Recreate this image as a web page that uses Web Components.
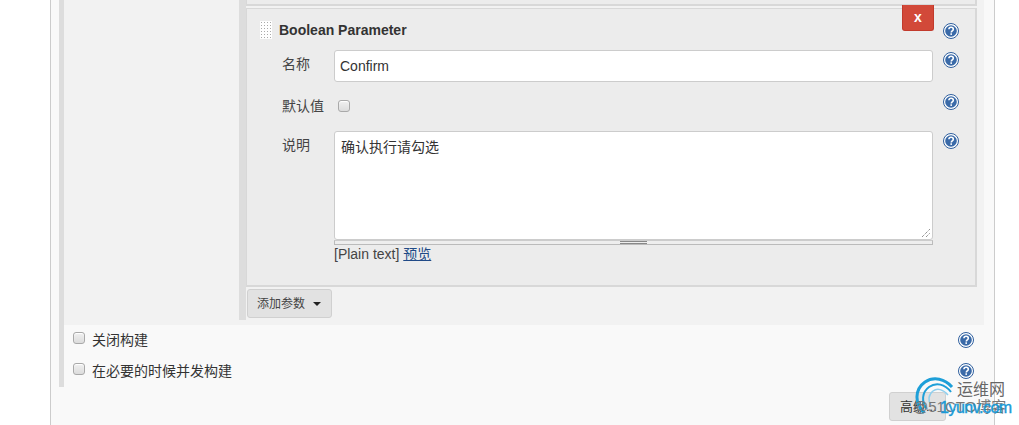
<!DOCTYPE html>
<html><head><meta charset="utf-8"><style>
html,body{margin:0;height:425px;overflow:hidden;background:#fff;font:14px "Liberation Sans","Noto Sans CJK SC",sans-serif;color:#333}
</style></head><body>
<template id="help-t"><style>:host{display:block;width:16px;height:16px}svg{display:block}</style>
<svg width="16" height="16" viewBox="0 0 16 16"><circle cx="8" cy="8" r="7.5" fill="#fff" stroke="#2f5f9e"/><circle cx="8" cy="8" r="5.8" fill="#3a6aa8"/><path d="M5.9 6.3c.1-1.3 1-2 2.2-2 1.300 0 2.200.8 2.200 1.900 0 1.700-2 1.700-2 3.200" fill="none" stroke="#fff" stroke-width="1.600"/><rect x="7.400" y="10.300" width="1.600" height="1.600" fill="#fff"/></svg></template>
<script>
function sh(el,html){el.attachShadow({mode:'open'}).innerHTML=html}
customElements.define('jk-help',class extends HTMLElement{constructor(){super();this.attachShadow({mode:'open'}).appendChild(document.getElementById('help-t').content.cloneNode(true))}});
customElements.define('jk-check',class extends HTMLElement{constructor(){super();sh(this,`<style>:host{display:block;width:12px;height:12px;box-sizing:border-box;border:1px solid #a9a9a9;border-radius:3px;background:linear-gradient(#f0f0f0,#dcdcdc);box-shadow:inset 0 1px 1px #fff}</style>`)}});
customElements.define('jk-row',class extends HTMLElement{constructor(){super();sh(this,`<style>
:host{display:grid;grid-template-columns:52px 599px 1fr;column-gap:0;box-sizing:border-box;padding-left:35px;font-size:14px;color:#444}
.h{padding-left:10px;padding-top:var(--ht,0)}
.l{padding-top:var(--lt,0)}
</style><div class="l"><slot name="label"></slot></div><div class="c"><slot></slot></div><div class="h"><jk-help></jk-help></div>`)}});
customElements.define('jk-top',class extends HTMLElement{constructor(){super();sh(this,`<style>
:host{display:flex;align-items:center;box-sizing:border-box;height:41px;padding-left:13px;font:bold 14px "Liberation Sans",sans-serif;color:#333}
.g{width:12px;height:18px;margin-right:7px;background-color:#fff;background-image:radial-gradient(#aaa 0.7px,transparent 0.8px);background-size:3px 3px}
.x{position:absolute;left:655px;top:-4px;width:32px;height:26px;box-sizing:border-box;padding-bottom:2px;background:#d24939;border-radius:0 0 3px 3px;color:#fff;display:flex;align-items:center;justify-content:center;font:bold 14px "Liberation Sans",sans-serif;border:1px solid #c23a2c;border-top:0}
.hp{position:absolute;left:696px;top:14px}
</style><span class="g"></span><span><slot></slot></span><span class="x">x</span><jk-help class="hp"></jk-help>`)}});
customElements.define('jk-textarea',class extends HTMLElement{constructor(){super();sh(this,`<style>
:host{display:block;width:599px}
.t{box-sizing:border-box;height:109px;background:#fff;border:1px solid #ccc;border-radius:3px;padding:4px 6px;font-size:14px;color:#333;position:relative}
.g{height:5px;box-sizing:border-box;background:#eee;border:1px solid #bbb;border-top:1px solid #ccc;display:flex;justify-content:center;align-items:flex-start}
.g i{display:block;width:27px;height:3px;border-top:1px solid #888;border-bottom:1px solid #888;box-sizing:border-box;margin-top:0}
svg{position:absolute;right:1px;bottom:1px}
.f{margin-top:0;line-height:18px;color:#444}
a{color:#204a87;text-decoration:underline}
</style><div class="t"><slot></slot><svg width="10" height="10"><path d="M1 9L9 1M5 9L9 5" stroke="#666" stroke-dasharray="1 1"/></svg></div><div class="g"><i></i></div><div class="f">[Plain text] <a href="#">预览</a></div>`)}});
customElements.define('jk-card',class extends HTMLElement{constructor(){super();sh(this,`<style>
:host{display:block;position:relative;box-sizing:border-box;width:731px;height:279px;background:#ececec;border:1px solid #d8d8d8;border-width:1px 2px 2px 1px}
</style><slot></slot>`)}});
customElements.define('jk-add',class extends HTMLElement{constructor(){super();sh(this,`<style>
:host{display:inline-flex;align-items:center;box-sizing:border-box;width:85px;height:29px;padding:0 0 3px 9px;background:#e2e2e2;border:1px solid #d0d0d0;border-radius:3px;font-size:12px;color:#444}
i{margin:3px 0 0 8px;border:4px solid transparent;border-top:4px solid #222;border-bottom:0}
</style><slot></slot><i></i>`)}});
customElements.define('jk-option',class extends HTMLElement{constructor(){super();sh(this,`<style>
:host{display:flex;align-items:flex-start;box-sizing:border-box;height:31px;padding-left:9px;font-size:14px;color:#333}
.txt{margin-left:7px;line-height:22px;flex:1}
jk-check{margin-top:3px}
jk-help{margin-right:10px;margin-top:3px}
</style><jk-check></jk-check><span class="txt"><slot></slot></span><jk-help></jk-help>`)}});
customElements.define('jk-mark',class extends HTMLElement{constructor(){super();sh(this,`<style>
:host{position:absolute;left:915px;top:377px;width:104px;height:48px;display:block;pointer-events:none}
svg{position:absolute;left:0;top:0}
.a{position:absolute;left:42px;top:3px;font-size:16px;line-height:20px;color:#666}
.b{position:absolute;left:-2px;top:20px;font:15px/20px "Liberation Sans","Noto Sans CJK SC",sans-serif;color:#777;white-space:nowrap}
.c{position:absolute;left:25px;top:21px;font:16px/20px "Liberation Sans",sans-serif;letter-spacing:-.5px;color:#1a9ad6;-webkit-text-stroke:.4px #1a9ad6;white-space:nowrap}
</style><svg width="60" height="48" viewBox="0 0 60 48" fill="none"><path d="M37 10C30 2 19-1 10 5C0 12-1 26 9 36" stroke="#1e9fd8" stroke-width="3"/><path d="M36 15C30 7 21 5 14 10C7 15 6 25 12 32" stroke="#1e9fd8" stroke-width="2"/><path d="M33 18C28 12 22 11 18 14C13 18 13 24 16 28" stroke="#8fcfee" stroke-width="1.500"/></svg><span class="b">@51CTO博客</span><span class="c">1yunv.com</span><span class="a">运维网</span>`)}});
customElements.define('jk-panel',class extends HTMLElement{constructor(){super();sh(this,`<style>
:host{display:block;box-sizing:border-box;margin-left:50px;width:945px;height:425px;background:#f9f9f9;border:solid #ccc;border-width:0 1px;padding-left:8px}
.outer{border-left:5px solid #ddd;height:387px;width:925px;box-sizing:border-box}
.gray{background:#f2f2f2;height:325px;width:920px;padding-left:175px;box-sizing:border-box}
.bar{border-left:7px solid #ddd;height:320px;box-sizing:border-box}
.stub{height:6px;width:731px;box-sizing:border-box;background:#ececec;border:solid #d8d8d8;border-width:0 2px 2px 1px}
.gap{height:2px}
.add{padding-top:2px;padding-left:1px}
.opts{padding-top:4px}
.adv{position:absolute;left:889px;top:392px;width:57px;height:29px;box-sizing:border-box;background:#e2e2e2;border:1px solid #d0d0d0;border-radius:3px;font-size:13px;line-height:27px;padding-left:10px;color:#333;white-space:nowrap;overflow:hidden}
</style><div class="outer"><div class="gray"><div class="bar"><div class="stub"></div><div class="gap"></div><slot name="card"></slot><div class="add"><slot name="add"></slot></div></div></div><div class="opts"><slot name="opt"></slot></div></div><div class="adv">高级...</div>`)}});
</script>
<jk-panel>
<jk-card slot="card">
  <jk-top>Boolean Parameter</jk-top>
  <jk-row style="height:42px;--lt:3px;--ht:2px"><span slot="label">名称</span>
    <div style="box-sizing:border-box;height:32px;background:#fff;border:1px solid #ccc;border-radius:3px;padding:0 5px;line-height:30px;font-size:14px;color:#333">Confirm</div></jk-row>
  <jk-row style="height:39px;--lt:3px;--ht:2px"><span slot="label">默认值</span><jk-check style="margin:8px 0 0 4px"></jk-check></jk-row>
  <jk-row style="--lt:3px;--ht:2px"><span slot="label">说明</span><jk-textarea>确认执行请勾选</jk-textarea></jk-row>
</jk-card>
<jk-add slot="add">添加参数</jk-add>
<jk-option slot="opt">关闭构建</jk-option>
<jk-option slot="opt">在必要的时候并发构建</jk-option>
</jk-panel>
<jk-mark></jk-mark>
</body></html>
